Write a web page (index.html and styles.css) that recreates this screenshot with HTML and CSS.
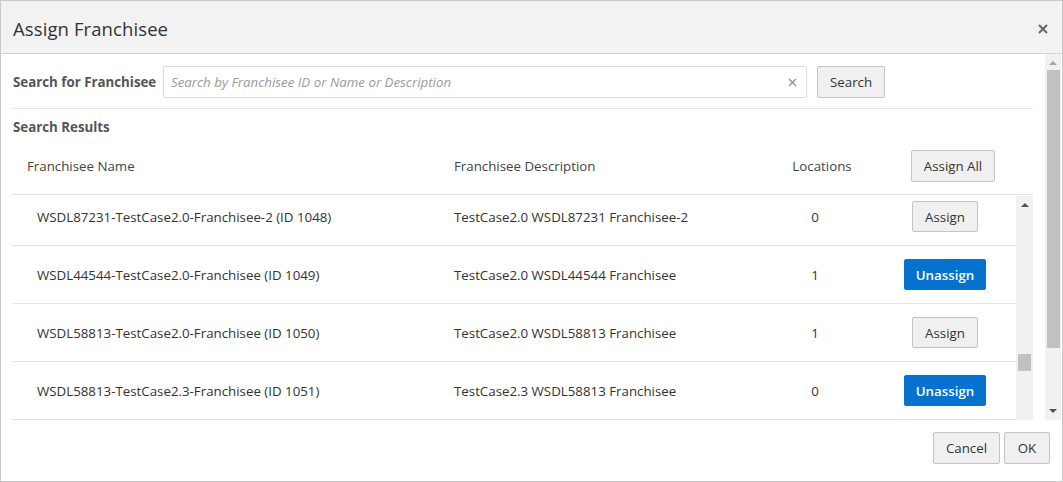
FILE: index.html
```html
<!DOCTYPE html>
<html lang="en">

<head>
    <meta charset="UTF-8">
    <meta name="viewport" content="width=device-width, initial-scale=1.0">
    <title>Assign Franchisee</title>
    <link rel="stylesheet" href="styles.css">
</head>

<body>
    <div class="dialog">
        <div class="dialog-header">
            <h1 class="title">Assign Franchisee</h1>
            <span class="close">
                <svg width="10" height="10" viewBox="0 0 10 10"><path d="M1 1L9 9M9 1L1 9" stroke="#666" stroke-width="2"/></svg>
            </span>
        </div>

        <div class="dialog-body">
            <div class="content">
                <div class="search-row">
                    <label class="search-label">Search for Franchisee</label>
                    <div class="search-box">
                        <span class="placeholder">Search by Franchisee ID or Name or Description</span>
                        <span class="clear">
                            <svg width="9" height="9" viewBox="0 0 9 9"><path d="M1 1L8 8M8 1L1 8" stroke="#888" stroke-width="1.2"/></svg>
                        </span>
                    </div>
                    <button class="btn">Search</button>
                </div>

                <div class="section-title">Search Results</div>

                <div class="table-head">
                    <div class="th th-name">Franchisee Name</div>
                    <div class="th">Franchisee Description</div>
                    <div class="th th-center">Locations</div>
                    <div class="th th-center"><button class="btn">Assign All</button></div>
                </div>

                <div class="table-body">
                    <div class="rows">
                        <div class="rows-inner">
                            <div class="row">
                                <div class="td td-name">WSDL87231-TestCase2.0-Franchisee-2 (ID 1048)</div>
                                <div class="td">TestCase2.0 WSDL87231 Franchisee-2</div>
                                <div class="td td-center">0</div>
                                <div class="td td-center"><button class="btn btn-sm">Assign</button></div>
                            </div>
                            <div class="row">
                                <div class="td td-name">WSDL44544-TestCase2.0-Franchisee (ID 1049)</div>
                                <div class="td">TestCase2.0 WSDL44544 Franchisee</div>
                                <div class="td td-center">1</div>
                                <div class="td td-center"><button class="btn btn-sm btn-primary">Unassign</button></div>
                            </div>
                            <div class="row">
                                <div class="td td-name">WSDL58813-TestCase2.0-Franchisee (ID 1050)</div>
                                <div class="td">TestCase2.0 WSDL58813 Franchisee</div>
                                <div class="td td-center">1</div>
                                <div class="td td-center"><button class="btn btn-sm">Assign</button></div>
                            </div>
                            <div class="row">
                                <div class="td td-name">WSDL58813-TestCase2.3-Franchisee (ID 1051)</div>
                                <div class="td">TestCase2.3 WSDL58813 Franchisee</div>
                                <div class="td td-center">0</div>
                                <div class="td td-center"><button class="btn btn-sm btn-primary">Unassign</button></div>
                            </div>
                        </div>
                    </div>
                    <div class="vscroll inner-scroll">
                        <span class="arrow arrow-up"></span>
                        <span class="spacer-top"></span>
                        <span class="thumb"></span>
                        <span class="spacer-bottom"></span>
                    </div>
                </div>
            </div>

            <div class="vscroll outer-scroll">
                <span class="arrow arrow-up arrow-off"></span>
                <span class="thumb"></span>
                <span class="spacer-bottom"></span>
                <span class="arrow arrow-down"></span>
            </div>
        </div>

        <div class="dialog-footer">
            <button class="btn">Cancel</button>
            <button class="btn">OK</button>
        </div>
    </div>
</body>

</html>
```

FILE: styles.css
```css
html,
body {
    margin: 0;
    width: 100%;
    height: 100%;
}

body {
    font-family: "Open Sans", "Noto Sans", sans-serif;
    font-size: 13.3px;
    color: #333;
    background: #fff;
}

.dialog {
    box-sizing: border-box;
    width: 1063px;
    height: 482px;
    border: 1px solid #c9c9c9;
    display: flex;
    flex-direction: column;
    overflow: hidden;
}

.dialog-header {
    height: 52px;
    flex: none;
    background: #f2f2f2;
    border-bottom: 1px solid #d4d4d4;
    display: flex;
    align-items: center;
    justify-content: space-between;
    padding: 0 14px 0 12px;
}

.title {
    margin: 2px 0 0;
    font-size: 18.5px;
    font-weight: normal;
    color: #333;
    letter-spacing: 0.1px;
}

.close {
    display: flex;
    margin-top: 4px;
}

.dialog-body {
    height: 366px;
    flex: none;
    display: flex;
}

.content {
    flex: 1;
    min-width: 0;
    padding: 12px 12px 0 12px;
    display: flex;
    flex-direction: column;
}

.search-row {
    display: flex;
    align-items: center;
    height: 32px;
    padding-bottom: 10px;
    border-bottom: 1px solid #e5e5e5;
}

.search-label {
    width: 150px;
    font-weight: bold;
    color: #555;
}

.search-box {
    box-sizing: border-box;
    width: 644px;
    height: 32px;
    border: 1px solid #dcdcdc;
    border-radius: 2px;
    display: flex;
    align-items: center;
    justify-content: space-between;
    padding: 0 9px 0 7px;
    margin-right: 10px;
}

.placeholder {
    font-style: italic;
    color: #9a9a9a;
}

.clear {
    display: flex;
}

.btn {
    box-sizing: border-box;
    height: 32px;
    min-width: 46px;
    padding: 0 12px;
    font-family: inherit;
    font-size: 13.3px;
    color: #333;
    background: #f0f0f0;
    border: 1px solid #c4c4c4;
    border-radius: 2px;
}

.btn-sm {
    height: 31px;
}

.btn-primary {
    background: #0572ce;
    border-color: #0572ce;
    color: #fff;
    font-weight: 600;
    padding: 0 11px;
}

.section-title {
    font-weight: bold;
    color: #555;
    margin-top: 9px;
    line-height: 18px;
}

.table-head {
    display: grid;
    grid-template-columns: 441px 302px 132px 1fr;
    align-items: center;
    height: 58px;
    padding-right: 15px;
    border-bottom: 1px solid #e3e3e3;
}

.th {
    color: #444;
    padding-top: 2px;
}

.th-name {
    padding-left: 14px;
}

.th-center,
.td-center {
    display: flex;
    justify-content: center;
}

.table-body {
    flex: 1;
    display: flex;
    min-height: 0;
}

.rows {
    flex: 1;
    overflow: hidden;
}

.rows-inner {
    margin-top: -7px;
}

.row {
    display: grid;
    grid-template-columns: 441px 302px 118px 1fr;
    align-items: center;
    height: 57px;
    border-bottom: 1px solid #e3e3e3;
}

.td {
    color: #333;
}

.td-name {
    padding-left: 24px;
}

.vscroll {
    width: 17px;
    flex: none;
    background: #f1f1f1;
    display: flex;
    flex-direction: column;
    align-items: center;
}

.outer-scroll {
    width: 16px;
    margin-right: 1px;
}

.inner-scroll {
    margin-top: 1px;
}

.arrow {
    width: 0;
    height: 0;
    border-left: 4px solid transparent;
    border-right: 4px solid transparent;
}

.arrow-up {
    border-bottom: 4px solid #505050;
    margin: 7px 0 5px;
}

.arrow-off {
    border-bottom-color: #a3a3a3;
}

.arrow-down {
    border-top: 4px solid #505050;
    margin: 5px 0 7px;
}

.thumb {
    width: 13px;
    background: #c1c1c1;
}

.outer-scroll .thumb {
    height: 278px;
}

.inner-scroll .spacer-top {
    height: 142px;
}

.inner-scroll .thumb {
    height: 17px;
}

.spacer-bottom {
    flex: 1;
}

.dialog-footer {
    flex: 1;
    display: flex;
    justify-content: flex-end;
    align-items: flex-start;
    gap: 4px;
    padding: 12px 12px 0 0;
}
```
